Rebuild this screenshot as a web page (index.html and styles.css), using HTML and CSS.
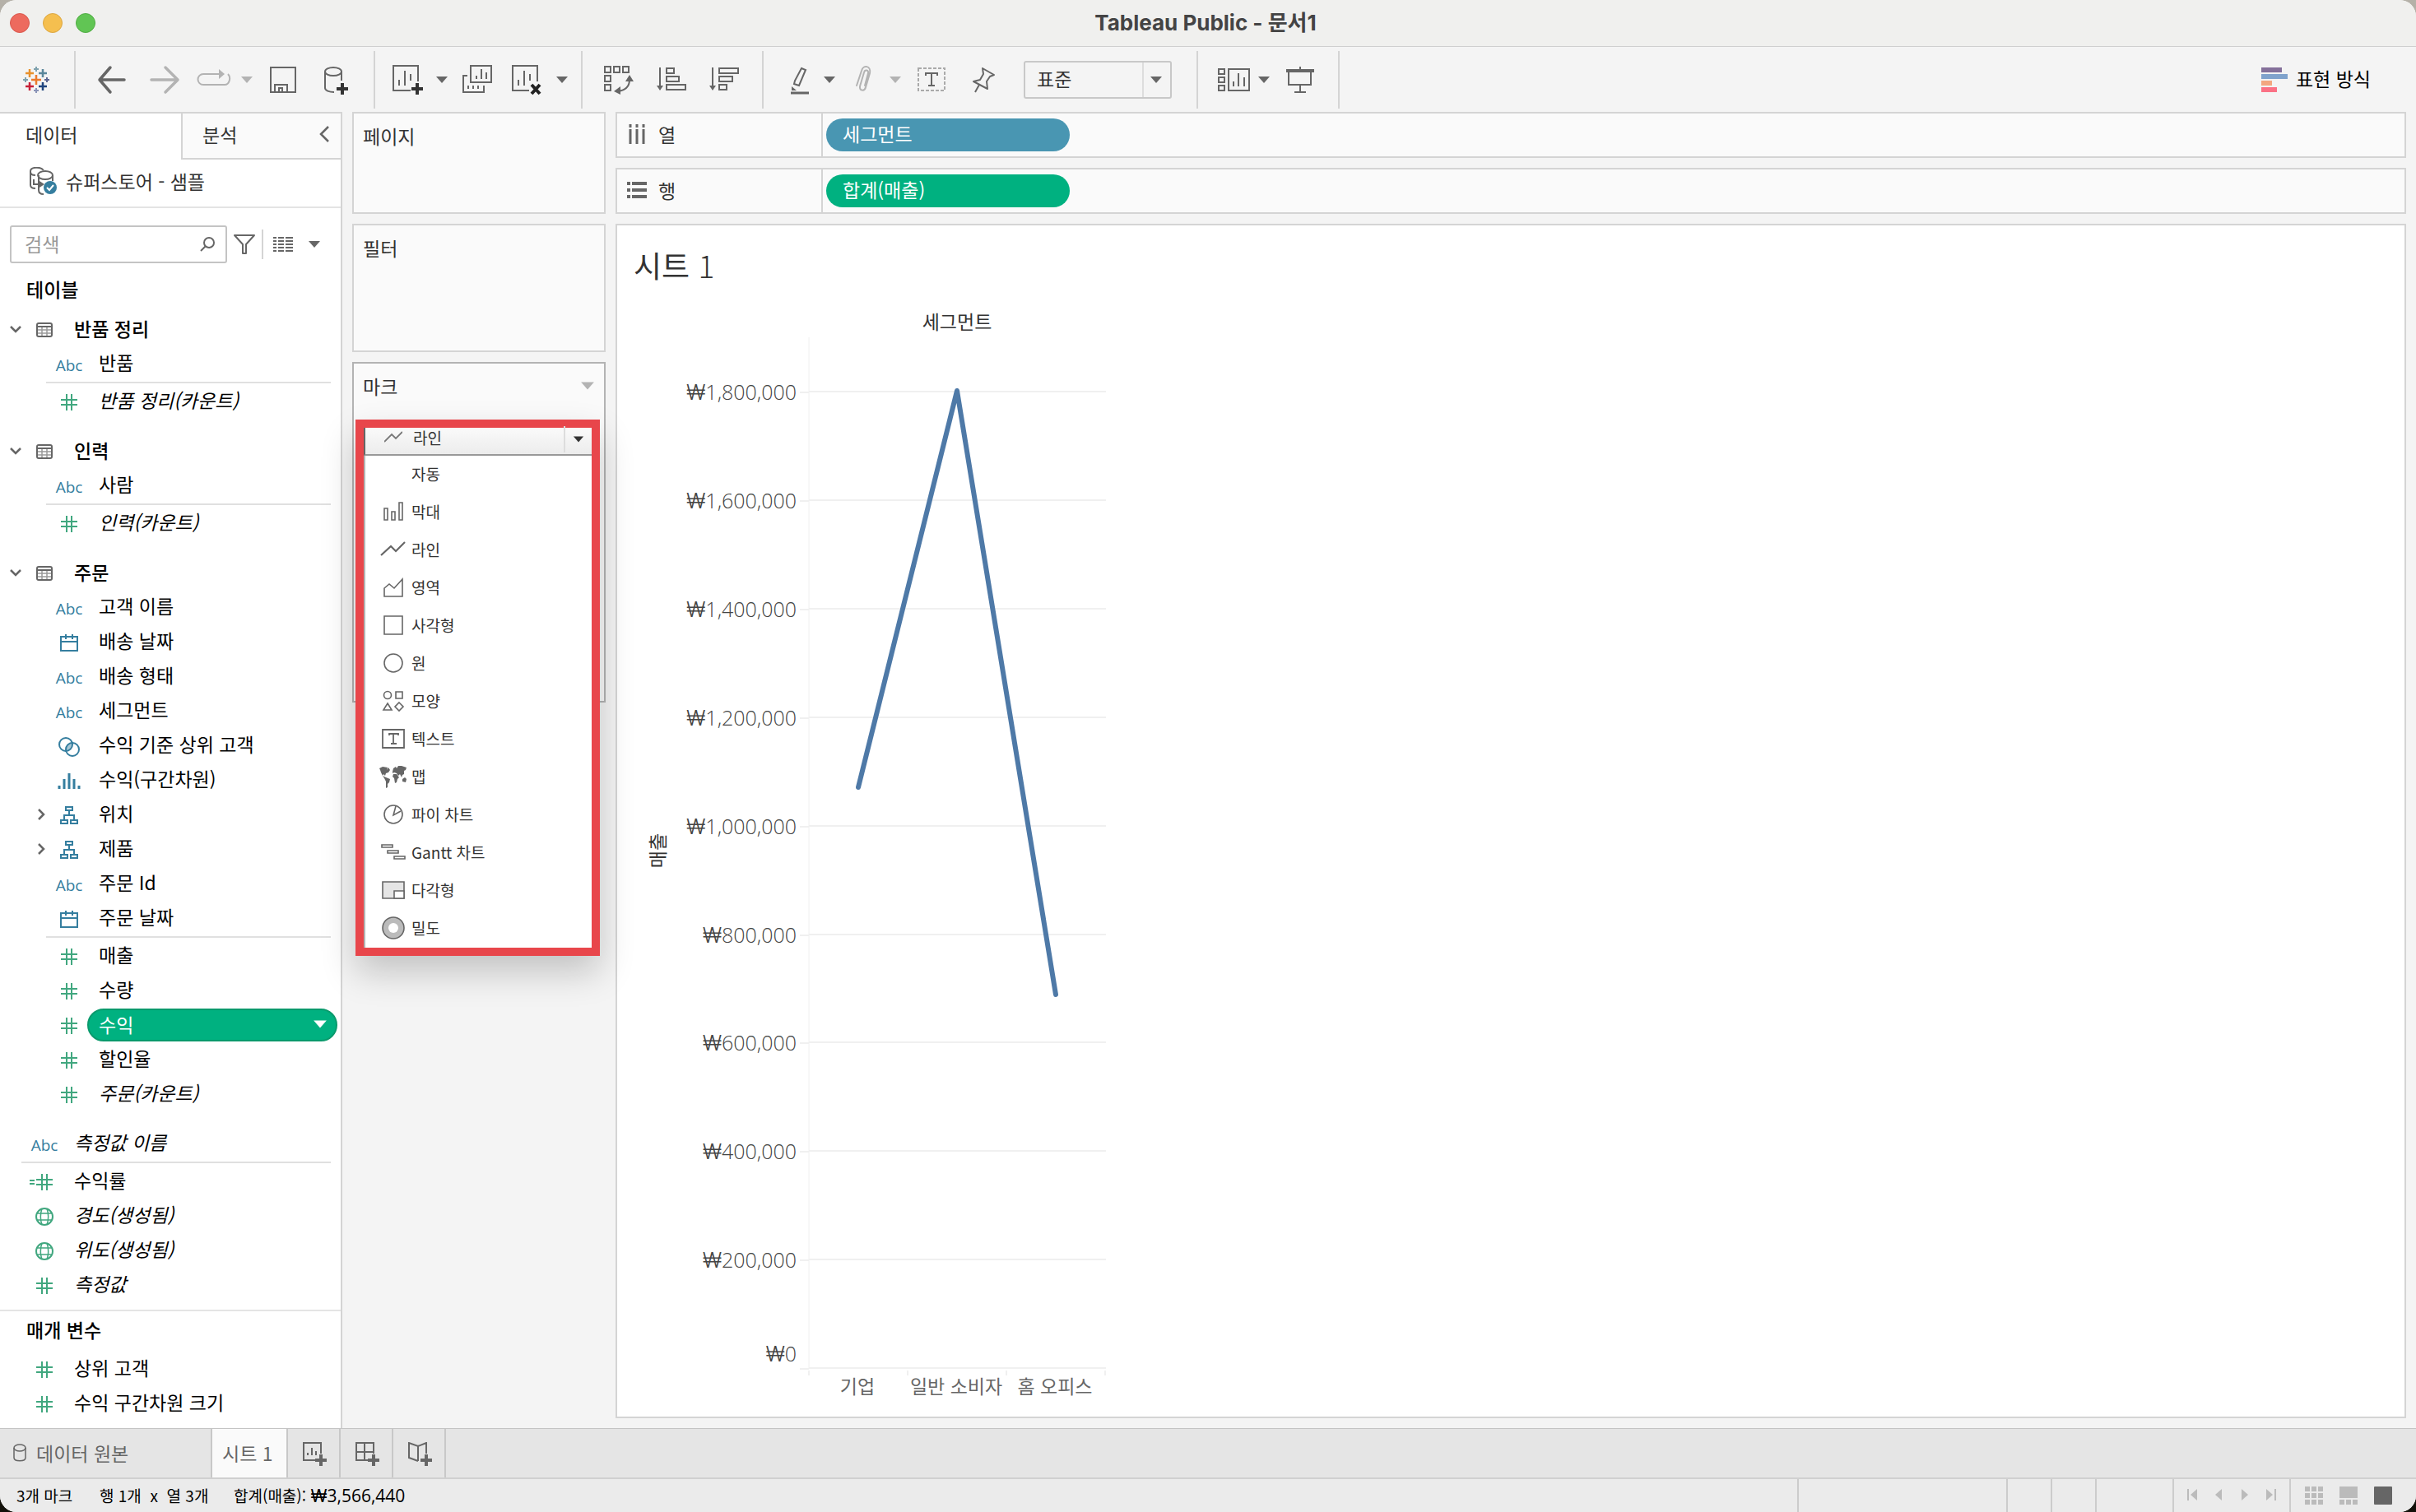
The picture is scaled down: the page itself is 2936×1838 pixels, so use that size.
FILE: index.html
```
<!DOCTYPE html>
<html lang="ko">
<head>
    <meta charset="UTF-8">
    <meta name="viewport" content="width=device-width, initial-scale=1.0">
    <title>Tableau Public - 문서1</title>
    <link rel="stylesheet" href="styles.css">
</head>
<body>
    <svg class="sprite" aria-hidden="true">
        <symbol id="caret" viewBox="0 0 16 16"><path d="M1 4h14l-7 8z" fill="currentColor"/></symbol>
        <symbol id="hash" viewBox="-1 -1 22 22"><path d="M7 0v20M13 0v20M0 7h20M0 13h20" fill="none" stroke="currentColor" stroke-width="2"/></symbol>
        <symbol id="calc" viewBox="-1 -1 30 22"><path d="M15 0v20M21 0v20M8 7h20M8 13h20M0 8h6M0 12h6" fill="none" stroke="currentColor" stroke-width="2"/></symbol>
        <symbol id="globe" viewBox="0 0 22 22"><g fill="none" stroke="currentColor" stroke-width="2"><circle cx="11" cy="11" r="10"/><path d="M2 7h18M2 15h18M8 1c-2 6-2 14 0 20M14 1c2 6 2 14 0 20" stroke-width="1.5"/></g></symbol>
        <symbol id="calendar" viewBox="0 0 22 22"><path d="M1 4h20v17H1zM1 10h20M7 1v6M15 1v6" fill="none" stroke="currentColor" stroke-width="2"/></symbol>
        <symbol id="tree" viewBox="0 0 22 22"><path d="M7 1h8v4H7zM11 5v6M5 16v-5h12v5M1 17h8v4H1zM13 17h8v4h-8z" fill="none" stroke="currentColor" stroke-width="2"/></symbol>
        <symbol id="table" viewBox="0 0 20 18"><path d="M1 5h18M1 9h18M1 13h18M7 5v12M13 5v12" fill="none" stroke="#999" stroke-width="1.5"/><rect x="1" y="1" width="18" height="16" rx="2" fill="none" stroke="#666" stroke-width="2"/><path d="M1 5h18" stroke="#666" stroke-width="2"/></symbol>
        <symbol id="chevron-down" viewBox="0 0 14 14"><path d="M1 4l6 6 6-6" fill="none" stroke="#666" stroke-width="2.5"/></symbol>
        <symbol id="chevron-right" viewBox="0 0 14 14"><path d="M4 1l6 6-6 6" fill="none" stroke="#666" stroke-width="2.5"/></symbol>
    </svg>

    <div class="window">
        <header class="titlebar">
            <div class="lights"><span class="light red"></span><span class="light yellow"></span><span class="light green"></span></div>
            <h1>Tableau Public - 문서1</h1>
        </header>

        <nav class="toolbar">
            <div class="group">
                <button class="tool" aria-label="시작 페이지">
                    <svg viewBox="0 0 40 40"><g fill="none" stroke-width="2.5"><path d="M20 14v12M14 20h12" stroke="#eb7a2c"/><path d="M12 7v10M7 12h10" stroke="#e8912d"/><path d="M28 7v10M23 12h10" stroke="#5b879b"/><path d="M12 23v10M7 28h10" stroke="#c72037"/><path d="M28 23v10M23 28h10" stroke="#1f447e"/><path d="M20 4v6M17 7h6M7 17v6M4 20h6" stroke="#7fa2ae" stroke-width="2"/><path d="M33 17v6M30 20h6" stroke="#5c6692" stroke-width="2"/><path d="M20 30v6M17 33h6" stroke="#8a94b8" stroke-width="2"/></g></svg>
                </button>
            </div>
            <div class="group">
                <button class="tool" aria-label="실행 취소"><svg viewBox="0 0 40 40"><path d="M35 20H5M18 5L5 20l13 15" fill="none" stroke="#666" stroke-width="3.5" stroke-linecap="round" stroke-linejoin="round"/></svg></button>
                <button class="tool" aria-label="다시 실행"><svg viewBox="0 0 40 40"><path d="M4 20h32M21 5l15 15-15 15" fill="none" stroke="#b3b3b3" stroke-width="3.5" stroke-linecap="round" stroke-linejoin="round"/></svg></button>
                <button class="tool" aria-label="재생"><svg viewBox="0 0 40 40"><path d="M27 13H3a6 6 0 0 0 0 13h26c6 0 8-9 4-13" fill="none" stroke="#b3b3b3" stroke-width="2"/><path d="M22 7l7 6-7 6z" fill="#b3b3b3"/></svg></button>
                <button class="caret light-gray" aria-label="재생 옵션"><svg><use href="#caret"/></svg></button>
                <button class="tool" aria-label="저장"><svg viewBox="0 0 40 40"><path d="M5 5h30v30H5zM10 35v-9h15v9M15 35v-5h4v5" fill="none" stroke="#666" stroke-width="2"/></svg></button>
                <button class="tool" aria-label="새 데이터 원본"><svg viewBox="0 0 40 40"><ellipse cx="17" cy="10" rx="10" ry="5" fill="none" stroke="#666" stroke-width="2"/><path d="M7 10v20c0 3 5 5 11 5M27 10v11" fill="none" stroke="#666" stroke-width="2"/><path d="M28 24v14M21 31h14" stroke="#333" stroke-width="4"/></svg></button>
            </div>
            <div class="group group-sheet">
                <button class="tool" aria-label="새 워크시트"><svg viewBox="0 0 40 40"><path d="M24 33H3V3h30v19M10 27v-7M17 27V9M24 21v-8" fill="none" stroke="#666" stroke-width="2"/><path d="M32 24v14M25 31h14" stroke="#333" stroke-width="4"/></svg></button>
                <button class="caret" aria-label="새 워크시트 옵션"><svg><use href="#caret"/></svg></button>
                <button class="tool" aria-label="중복"><svg viewBox="0 0 40 40"><path d="M11 3h25v20H11zM7 15H2v20h25v-8M18 19v-4M24 19V7M30 19v-8M8 27v4M14 27v4M20 27v4" fill="none" stroke="#666" stroke-width="2"/></svg></button>
                <button class="tool" aria-label="시트 지우기"><svg viewBox="0 0 40 40"><path d="M22 33H2V3h30v19M9 27v-7M16 27V9M23 21v-8" fill="none" stroke="#666" stroke-width="2"/><path d="M25 26l10 11M35 26L25 37" stroke="#222" stroke-width="4"/></svg></button>
                <button class="caret" aria-label="지우기 옵션"><svg><use href="#caret"/></svg></button>
            </div>
            <div class="group">
                <button class="tool" aria-label="행과 열 바꾸기"><svg viewBox="0 0 40 40"><path d="M3 4h7v7H3zM14 4h7v7h-7zM25 4h7v7h-7zM3 15h7v7H3zM3 26h7v7H3zM33 20c0 8-5 13-15 14" fill="none" stroke="#666" stroke-width="2"/><path d="M33 14l5 8H28zM14 34l8-6v10z" fill="#666"/></svg></button>
                <button class="tool" aria-label="오름차순 정렬"><svg viewBox="0 0 40 40"><path d="M6 5v24M14 6h9v6h-9zM14 16h15v6H14zM14 26h23v6H14z" fill="none" stroke="#666" stroke-width="2"/><path d="M2 27h8l-4 6z" fill="#666"/></svg></button>
                <button class="tool" aria-label="내림차순 정렬"><svg viewBox="0 0 40 40"><path d="M6 5v24M14 6h23v6H14zM14 16h16v6H14zM14 26h9v6h-9z" fill="none" stroke="#666" stroke-width="2"/><path d="M2 27h8l-4 6z" fill="#666"/></svg></button>
            </div>
            <div class="group group-format">
                <button class="tool" aria-label="하이라이트"><svg viewBox="0 0 40 40"><path d="M22 6l5 2-8 19-6-2 1-4z" fill="none" stroke="#666" stroke-width="2"/><path d="M9 36h22" stroke="#666" stroke-width="3"/><path d="M10 28l6 5h-6z" fill="#666"/></svg></button>
                <button class="caret" aria-label="하이라이트 옵션"><svg><use href="#caret"/></svg></button>
                <button class="tool" aria-label="그룹 멤버"><svg viewBox="0 0 40 40"><path d="M19 28l4-15c1-4-4-5-5-1l-5 17c-1 6 6 6 7 1l5-17c2-9-8-11-10-3l-6 18" transform="translate(0 -1)" fill="none" stroke="#b3b3b3" stroke-width="2" stroke-linecap="round"/></svg></button>
                <button class="caret light-gray" aria-label="그룹 옵션"><svg><use href="#caret"/></svg></button>
                <button class="tool" aria-label="마크 레이블 표시"><svg viewBox="0 0 40 40"><rect x="4" y="6" width="32" height="27" fill="none" stroke="#aaa" stroke-width="2" stroke-dasharray="4 2"/><path d="M13 15v-3h14v3M20 12v15M16 27h8" fill="none" stroke="#666" stroke-width="2"/></svg></button>
                <button class="tool" aria-label="축 고정"><svg viewBox="0 0 40 40"><path d="M18 6l14 8-5 2-4 6 1 9-17-9 8-2 4-7zM14 26L9 35" fill="none" stroke="#666" stroke-width="2" stroke-linejoin="round"/></svg></button>
                <div class="fit">
                    <select aria-label="맞춤"><option>표준</option></select>
                    <svg class="fit-caret"><use href="#caret"/></svg>
                </div>
            </div>
            <div class="group">
                <button class="tool" aria-label="카드 표시"><svg viewBox="0 0 40 40"><path d="M1 7h7v6H1zM1 17h7v6H1zM1 27h7v6H1zM13 7h25v26H13zM19 28v-6M25 28V12M32 28V17" fill="none" stroke="#666" stroke-width="2"/></svg></button>
                <button class="caret" aria-label="카드 옵션"><svg><use href="#caret"/></svg></button>
                <button class="tool" aria-label="프레젠테이션 모드"><svg viewBox="0 0 40 40"><path d="M3 9h34" stroke="#666" stroke-width="4"/><path d="M6 10v16h27V10M20 4v4M20 26v9M13 35h14" fill="none" stroke="#666" stroke-width="2"/></svg></button>
            </div>
            <button class="show-me">
                <svg viewBox="0 0 32 32"><path d="M0 1h25v6H0z" fill="#84709a"/><path d="M0 9h32v6H0z" fill="#80a3cc"/><path d="M0 17h13v6H0z" fill="#f3a780"/><path d="M0 25h19v6H0z" fill="#fb7185"/></svg>
                <span>표현 방식</span>
            </button>
        </nav>

        <main class="main">
            <aside class="panel">
                <div class="panel-tabs">
                    <button class="panel-tab active">데이터</button>
                    <button class="panel-tab">분석 <svg viewBox="0 0 12 20"><path d="M11 1L2 10l9 9" fill="none" stroke="#666" stroke-width="2.5"/></svg></button>
                </div>
                <div class="source">
                    <svg viewBox="0 0 34 34"><g fill="none" stroke="#666" stroke-width="2"><path d="M17 4C13-1 1 0 1 5v17c0 3 3 4 6 4M1 6c0 3 3 4 6 4M17 33c-4 0-6-2-6-5V10"/><ellipse cx="19" cy="10" rx="9" ry="5"/><path d="M28 10v7M5 15v6h8"/></g><path d="M12 17l6 4-6 4z" fill="#666"/><circle cx="25" cy="25" r="8" fill="#357e9f"/><path d="M21 25l3 3 5-6" fill="none" stroke="#fff" stroke-width="2"/></svg>
                    슈퍼스토어 - 샘플
                </div>
                <div class="search-row">
                    <div class="search">
                        <input type="text" placeholder="검색" aria-label="검색">
                        <svg viewBox="0 0 18 18"><circle cx="11" cy="7" r="6" fill="none" stroke="#666" stroke-width="2"/><path d="M7 11l-6 6" stroke="#666" stroke-width="2"/></svg>
                    </div>
                    <button class="filter" aria-label="필터"><svg viewBox="0 0 26 24"><path d="M1 1h24L15 12v11h-4V12z" fill="none" stroke="#666" stroke-width="2" stroke-linejoin="round"/></svg></button>
                    <button class="view" aria-label="보기"><svg viewBox="0 0 24 18"><path d="M0 1h24M0 5h24M0 9h24M0 13h24M0 17h24" stroke="#666" stroke-width="2"/><path d="M5 0v18M14 0v18" stroke="#fff" stroke-width="2"/></svg></button>
                    <button class="caret" aria-label="보기 옵션"><svg><use href="#caret"/></svg></button>
                </div>
                <h2 class="tables-title">테이블</h2>

                <section class="table-group">
                    <h3><svg class="arrow"><use href="#chevron-down"/></svg><svg class="table-icon"><use href="#table"/></svg>반품 정리</h3>
                    <div class="field"><span class="type">Abc</span>반품</div>
                    <hr>
                    <div class="field measure italic"><svg class="type"><use href="#hash"/></svg>반품 정리(카운트)</div>
                </section>
                <section class="table-group">
                    <h3><svg class="arrow"><use href="#chevron-down"/></svg><svg class="table-icon"><use href="#table"/></svg>인력</h3>
                    <div class="field"><span class="type">Abc</span>사람</div>
                    <hr>
                    <div class="field measure italic"><svg class="type"><use href="#hash"/></svg>인력(카운트)</div>
                </section>
                <section class="table-group">
                    <h3><svg class="arrow"><use href="#chevron-down"/></svg><svg class="table-icon"><use href="#table"/></svg>주문</h3>
                    <div class="field"><span class="type">Abc</span>고객 이름</div>
                    <div class="field"><svg class="type"><use href="#calendar"/></svg>배송 날짜</div>
                    <div class="field"><span class="type">Abc</span>배송 형태</div>
                    <div class="field"><span class="type">Abc</span>세그먼트</div>
                    <div class="field"><svg class="type type-set" viewBox="0 0 26 24"><path d="M17 6a9 9 0 0 0-8 11 9 9 0 0 0 8-11z" fill="#a9c8d6"/><g fill="none" stroke="currentColor" stroke-width="2"><circle cx="9" cy="9" r="8"/><circle cx="17" cy="15" r="8"/></g></svg>수익 기준 상위 고객</div>
                    <div class="field"><svg class="type" viewBox="0 0 28 22"><path d="M2 17v4M8 9v12M14 2v19M20 9v12M26 17v4" stroke="currentColor" stroke-width="3"/></svg>수익(구간차원)</div>
                    <div class="field"><svg class="arrow"><use href="#chevron-right"/></svg><svg class="type"><use href="#tree"/></svg>위치</div>
                    <div class="field"><svg class="arrow"><use href="#chevron-right"/></svg><svg class="type"><use href="#tree"/></svg>제품</div>
                    <div class="field"><span class="type">Abc</span>주문 Id</div>
                    <div class="field"><svg class="type"><use href="#calendar"/></svg>주문 날짜</div>
                    <hr>
                    <div class="field measure"><svg class="type"><use href="#hash"/></svg>매출</div>
                    <div class="field measure"><svg class="type"><use href="#hash"/></svg>수량</div>
                    <div class="field measure"><svg class="type"><use href="#hash"/></svg><button class="field-pill">수익<svg><use href="#caret"/></svg></button></div>
                    <div class="field measure"><svg class="type"><use href="#hash"/></svg>할인율</div>
                    <div class="field measure italic"><svg class="type"><use href="#hash"/></svg>주문(카운트)</div>
                </section>
                <section class="root-fields">
                    <div class="field italic"><span class="type">Abc</span>측정값 이름</div>
                    <hr>
                    <div class="field measure"><svg class="type type-calc"><use href="#calc"/></svg>수익률</div>
                    <div class="field measure italic"><svg class="type"><use href="#globe"/></svg>경도(생성됨)</div>
                    <div class="field measure italic"><svg class="type"><use href="#globe"/></svg>위도(생성됨)</div>
                    <div class="field measure italic"><svg class="type"><use href="#hash"/></svg>측정값</div>
                </section>
                <section class="parameters root-fields">
                    <h2>매개 변수</h2>
                    <div class="field measure"><svg class="type"><use href="#hash"/></svg>상위 고객</div>
                    <div class="field measure"><svg class="type"><use href="#hash"/></svg>수익 구간차원 크기</div>
                </section>
            </aside>

            <div class="cards">
                <section class="card pages"><h2>페이지</h2></section>
                <section class="card filters"><h2>필터</h2></section>
                <section class="card marks">
                    <h2>마크 <svg><use href="#caret"/></svg></h2>
                    <div class="mark-picker">
                        <div class="mark-current">
                            <svg class="mark-line" viewBox="0 0 22 14"><path d="M0 13l9-9 5 5 8-8" fill="none" stroke="#777" stroke-width="1.8"/></svg>
                            <select aria-label="마크 유형"><option>라인</option></select>
                            <svg class="mark-caret"><use href="#caret"/></svg>
                        </div>
                        <ul class="mark-menu">
                            <li><button><svg viewBox="0 0 34 30"></svg>자동</button></li>
                            <li><button><svg viewBox="0 0 34 30"><path d="M6 11h4v14H6zM15 15h4v10h-4zM24 4h4v21h-4z"/></svg>막대</button></li>
                            <li><button><svg viewBox="0 0 34 30"><path d="M2 22l12-11 6 6L31 6" stroke-width="2.2"/></svg>라인</button></li>
                            <li><button><svg viewBox="0 0 34 30"><path d="M6 26V16l6-5 6 5L28 5v21z"/></svg>영역</button></li>
                            <li><button><svg viewBox="0 0 34 30"><path d="M6 4h22v22H6z"/></svg>사각형</button></li>
                            <li><button><svg viewBox="0 0 34 30"><circle cx="17" cy="15" r="11"/></svg>원</button></li>
                            <li><button><svg viewBox="0 0 34 30"><circle cx="10" cy="8" r="4.5"/><path d="M20 4h8v8h-8zM10 18l5 8H5zM24 17l5 5-5 5-5-5z"/></svg>모양</button></li>
                            <li><button><svg viewBox="0 0 34 30"><path d="M4 4h26v22H4zM12 11V9h11v2M17 9v12M14 21h7" stroke-width="1.8"/></svg>텍스트</button></li>
                            <li><button><svg viewBox="0 0 34 30"><path fill="#666" stroke="none" d="M0 5l4-2 6 1-1 3 2-3 2 3-2 3-3 1-1 3-2-2-1 2 4 2 5 2-1 4-2 2v4l-2 1v-8l-2-4-2-3-2-4-1-3zM16 9l1-4 3-2 1 2 2-3 4 0 6 2-1 3-2 1v4l-2 1-1 3-2-4-2 2-2-3-3-1-2 1zM17 12l4 0 3 4-2 2-1 4-2 1-1-6-2-2zM28 18l3-2 2 2-1 4-4-1z"/></svg>맵</button></li>
                            <li><button><svg viewBox="0 0 34 30"><circle cx="17" cy="15" r="11"/><path d="M20 5l-3 11 9-5"/></svg>파이 차트</button></li>
                            <li><button><svg viewBox="0 0 34 30"><path d="M3 6h13v3H3zM10 13h13v3H10zM18 20h13v3H18z"/></svg>Gantt 차트</button></li>
                            <li><button><svg viewBox="0 0 34 30"><path d="M4 5h26v20H4z" fill="#e5e5e5"/><path d="M18 16h12v9H18z" fill="#fff"/></svg>다각형</button></li>
                            <li><button><svg viewBox="0 0 34 30"><circle cx="17" cy="15" r="13" fill="#bbb"/><circle cx="17" cy="15" r="6" fill="#fff" stroke="none"/></svg>밀도</button></li>
                        </ul>
                    </div>
                </section>
            </div>

            <div class="workspace">
                <div class="shelf">
                    <div class="shelf-name"><svg viewBox="0 0 24 24"><path d="M4 0v4M12 0v4M20 0v4M4 6v18M12 6v18M20 6v18" stroke="#666" stroke-width="3"/></svg>열</div>
                    <button class="pill blue">세그먼트</button>
                </div>
                <div class="shelf">
                    <div class="shelf-name"><svg viewBox="0 0 24 24"><path d="M0 4h4M0 12h4M0 20h4M6 4h18M6 12h18M6 20h18" stroke="#666" stroke-width="4"/></svg>행</div>
                    <button class="pill">합계(매출)</button>
                </div>
                <section class="sheet">
                    <h2>시트 <span class="thin">1</span></h2>
                    <svg class="chart" viewBox="770 370 620 1340">
                        <g stroke="#f0f0f0" stroke-width="2">
                            <path d="M983 476h361M983 608h361M983 740h361M983 872h361M983 1004h361M983 1136h361M983 1267h361M983 1399h361M983 1531h361M983 1663h361"/>
                            <path d="M972 477h11M972 609h11M972 741h11M972 873h11M972 1005h11M972 1137h11M972 1268h11M972 1400h11M972 1532h11M972 1664h11"/>
                            <path d="M983 1666v6M1103 1666v6M1223 1666v6M1343 1666v6"/>
                            <path d="M983 410v1253" stroke-width="1"/>
                        </g>
                        <text class="header" x="1163" y="400">세그먼트</text>
                        <g class="values">
                            <text x="968" y="486"><tspan class="won">₩</tspan>1,800,000</text>
                            <text x="968" y="618"><tspan class="won">₩</tspan>1,600,000</text>
                            <text x="968" y="750"><tspan class="won">₩</tspan>1,400,000</text>
                            <text x="968" y="882"><tspan class="won">₩</tspan>1,200,000</text>
                            <text x="968" y="1014"><tspan class="won">₩</tspan>1,000,000</text>
                            <text x="968" y="1146"><tspan class="won">₩</tspan>800,000</text>
                            <text x="968" y="1277"><tspan class="won">₩</tspan>600,000</text>
                            <text x="968" y="1409"><tspan class="won">₩</tspan>400,000</text>
                            <text x="968" y="1541"><tspan class="won">₩</tspan>200,000</text>
                            <text x="968" y="1655"><tspan class="won">₩</tspan>0</text>
                        </g>
                        <text class="header" transform="translate(808 1034) rotate(-90)">매출</text>
                        <path d="M1043 957L1163 475l120 734" fill="none" stroke="#4e79a7" stroke-width="6" stroke-linecap="round" stroke-linejoin="round"/>
                        <g class="names">
                            <text x="1042" y="1694">기업</text>
                            <text x="1162" y="1694">일반 소비자</text>
                            <text x="1282" y="1694">홈 오피스</text>
                        </g>
                    </svg>
                </section>
            </div>
        </main>

        <nav class="sheet-tabs">
            <button class="tab tab-source"><svg viewBox="0 0 16 22"><g fill="none" stroke="#666" stroke-width="1.5"><ellipse cx="8" cy="5" rx="7" ry="4"/><path d="M1 5v12c0 5 14 5 14 0V5"/></g></svg>데이터 원본</button>
            <button class="tab tab-active">시트 1</button>
            <button class="tab tab-new" aria-label="새 워크시트"><svg viewBox="0 0 30 30"><path d="M15 22H1V1h21v13M6 16v-3M11 16V7M16 16v-5" fill="none" stroke="#666" stroke-width="2"/><path d="M22 15v14M15 22h14" stroke="#666" stroke-width="4"/></svg></button>
            <button class="tab tab-new" aria-label="새 대시보드"><svg viewBox="0 0 30 30"><path d="M15 22H1V1h21v13M1 12h21M11 1v21" fill="none" stroke="#666" stroke-width="2"/><path d="M22 15v14M15 22h14" stroke="#666" stroke-width="4"/></svg></button>
            <button class="tab tab-new" aria-label="새 스토리"><svg viewBox="0 0 30 30"><path d="M12 23L1 19V1l11 4 10-4v13M12 5v18" fill="none" stroke="#666" stroke-width="2"/><path d="M22 15v14M15 22h14" stroke="#666" stroke-width="4"/></svg></button>
        </nav>

        <footer class="status">
            <span class="count">3개 마크</span>
            <span class="size">행 1개 &nbsp;x&nbsp; 열 3개</span>
            <span>합계(매출): <span class="amount"><span class="won">₩</span>3,566,440</span></span>
            <div class="cells"><i class="cell wide"></i><i class="cell"></i><i class="cell"></i><i class="cell last"></i></div>
            <div class="pager">
                <button aria-label="처음"><svg viewBox="0 0 14 14"><path d="M1 0h2v14H1zM13 0v14L5 7z"/></svg></button>
                <button aria-label="이전"><svg viewBox="0 0 14 14"><path d="M11 0v14L3 7z"/></svg></button>
                <button aria-label="다음"><svg viewBox="0 0 14 14"><path d="M3 0v14l8-7z"/></svg></button>
                <button aria-label="마지막"><svg viewBox="0 0 14 14"><path d="M11 0h2v14h-2zM1 0v14l8-7z"/></svg></button>
            </div>
            <div class="views">
                <button aria-label="시트 정렬"><svg viewBox="0 0 22 22"><path d="M0 0h6v6H0zM8 0h6v6H8zM16 0h6v6h-6zM0 8h6v6H0zM8 8h6v6H8zM16 8h6v6h-6zM0 16h6v6H0zM8 16h6v6H8zM16 16h6v6h-6z"/></svg></button>
                <button aria-label="필름스트립"><svg viewBox="0 0 22 22"><path d="M0 0h22v14H0zM0 16h6v6H0zM8 16h6v6H8zM16 16h6v6h-6z"/></svg></button>
                <button class="on" aria-label="탭 표시"><svg viewBox="0 0 22 22"><rect width="22" height="22" rx="1"/></svg></button>
            </div>
        </footer>
    </div>
</body>
</html>
```
FILE: styles.css
```
* {
    box-sizing: border-box;
}
body {
    margin: 0;
    background: linear-gradient(#b5b1a8, #12110a);
    font-family: "Noto Sans CJK KR", sans-serif;
    font-size: 23px;
    line-height: 32px;
    color: #333;
}
h1, h2, h3, ul {
    margin: 0;
    padding: 0;
    font-size: 23px;
    font-weight: 400;
    list-style: none;
}
button, input, select {
    margin: 0;
    padding: 0;
    border: none;
    background: none;
    font: inherit;
    color: inherit;
    text-align: left;
}
select {
    appearance: none;
}
svg {
    display: block;
    flex: none;
}
.sprite {
    position: absolute;
    width: 0;
    height: 0;
}
.window {
    display: flex;
    flex-direction: column;
    min-height: 100vh;
    background: #f4f4f4;
    border-radius: 20px;
    overflow: hidden;
}

/* title bar */
.titlebar {
    display: flex;
    align-items: center;
    height: 57px;
    padding: 0 12px;
    background: #f0f0ee;
    border-bottom: 1px solid #cfcfcf;
}
.titlebar h1 {
    flex: 1;
    padding-right: 110px;
    font-family: Inter, "Noto Sans CJK KR", sans-serif;
    font-size: 26px;
    font-weight: 700;
    text-align: center;
    color: #444;
}
.lights {
    display: flex;
    gap: 16px;
}
.light {
    width: 24px;
    height: 24px;
    border-radius: 50%;
}
.red {
    background: #ed6a5e;
    border: 1px solid #d8574c;
}
.yellow {
    background: #f5bf4f;
    border: 1px solid #dba640;
}
.green {
    background: #61c554;
    border: 1px solid #50ac43;
}

/* toolbar */
.toolbar {
    display: flex;
    align-items: center;
    height: 79px;
}
.group {
    display: flex;
    align-items: center;
    height: 70px;
    padding: 0 26px 0 24px;
    border-right: 2px solid #d4d4d4;
}
.group-sheet {
    padding: 0 15px 0 19px;
}
.group-format {
    padding-right: 30px;
}
.tool svg {
    width: 40px;
    height: 40px;
    overflow: visible;
}
.caret {
    color: #666;
}
.caret svg {
    width: 16px;
    height: 16px;
}
.light-gray {
    color: #b3b3b3;
}
.tool + .tool {
    margin-left: 24px;
}
.tool + .caret {
    margin-left: 8px;
}
.caret + .tool {
    margin-left: 16px;
}
.group-sheet .tool + .tool {
    margin-left: 20px;
}
.group-sheet .tool + .caret {
    margin-left: 14px;
}
.fit {
    position: relative;
    margin-left: 28px;
}
.fit select {
    display: block;
    width: 180px;
    height: 46px;
    padding: 0 0 4px 14px;
    border: 2px solid #c8c8c8;
    border-radius: 3px;
    background: linear-gradient(#ddd, #ddd) 142px 0 / 2px 100% no-repeat;
}
.fit-caret {
    position: absolute;
    right: 11px;
    top: 15px;
    width: 16px;
    height: 16px;
    color: #666;
}
.show-me {
    display: flex;
    align-items: center;
    gap: 10px;
    margin-left: auto;
    margin-right: 55px;
    color: #000;
}
.show-me span {
    padding-bottom: 4px;
}
.show-me svg {
    width: 32px;
    height: 32px;
}

/* main area */
.main {
    display: flex;
    flex: 1;
}
.panel {
    display: flex;
    flex-direction: column;
    width: 416px;
    border-top: 2px solid #d4d4d4;
    border-right: 2px solid #d4d4d4;
    background: #fff;
    color: #000;
}
.panel-tabs {
    display: flex;
    height: 56px;
    color: #333;
}
.panel-tab {
    display: flex;
    align-items: center;
    justify-content: space-between;
    width: 194px;
    padding: 0 14px 4px 24px;
    border-left: 2px solid #d4d4d4;
    border-bottom: 2px solid #d4d4d4;
    background: #fafafa;
}
.panel-tab.active {
    width: 220px;
    padding: 0 0 6px 31px;
    border: none;
    background: none;
}
.panel-tab svg {
    width: 12px;
    height: 20px;
}
.source {
    display: flex;
    align-items: center;
    gap: 10px;
    height: 59px;
    padding: 0 0 6px 36px;
    border-bottom: 2px solid #e4e4e4;
    color: #333;
}
.source svg {
    width: 34px;
    height: 34px;
}
.search-row {
    display: flex;
    align-items: center;
    padding: 21px 12px 15px;
}
.search {
    position: relative;
    flex: none;
}
.search input {
    display: block;
    width: 264px;
    height: 46px;
    padding: 0 40px 3px 16px;
    border: 2px solid #c4c4c4;
    border-radius: 3px;
}
.search input::placeholder {
    color: #999;
    opacity: 1;
}
.search svg {
    position: absolute;
    right: 15px;
    top: 14px;
    width: 18px;
    height: 18px;
}
.filter {
    margin: 0 8px;
}
.filter svg {
    width: 26px;
    height: 24px;
}
.view {
    margin-right: 18px;
    padding: 9px 0 9px 12px;
    border-left: 2px solid #d4d4d4;
}
.view svg {
    width: 24px;
    height: 18px;
}
.tables-title {
    height: 45px;
    padding-left: 32px;
}
.tables-title, .table-group h3, .parameters h2 {
    font-weight: 500;
}
.table-group {
    margin-bottom: 20px;
}
.table-group:nth-of-type(3) {
    margin-bottom: 18px;
}
.table-group h3 {
    display: flex;
    align-items: center;
    height: 40px;
    padding: 0 0 2px 12px;
}
.arrow {
    width: 14px;
    height: 14px;
    margin-top: 2px;
}
.table-icon {
    width: 20px;
    height: 18px;
    margin: 4px 26px 0 18px;
}
.table-group hr, .root-fields hr {
    height: 2px;
    margin: 2px 12px 0 56px;
    border: none;
    background: #e0e0e0;
}
.root-fields hr {
    margin-left: 26px;
}
.field {
    display: grid;
    position: relative;
    align-items: center;
    height: 42px;
    padding: 0 0 2px 120px;
}
.root-fields .field {
    padding-left: 90px;
}
/* type icon sits in the gutter left of the name */
.field .type {
    position: absolute;
    left: 64px;
    top: 12px;
    width: 40px;
    height: 22px;
    font-family: "Open Sans", sans-serif;
    font-size: 19px;
    font-style: normal;
    line-height: 24px;
    text-align: center;
    color: #357e9f;
}
.root-fields .field .type {
    left: 34px;
}
.field.measure .type {
    color: #41a77f;
}
.root-fields .field .type-calc {
    left: 30px;
}
.field .type-set {
    height: 24px;
}
.field .arrow {
    position: absolute;
    left: 43px;
    top: 13px;
}
.italic {
    font-style: italic;
}
.field-pill {
    display: flex;
    align-items: center;
    justify-content: space-between;
    height: 40px;
    margin: 2px 4px 0 -14px;
    padding: 0 10px 2px 12px;
    border: 2px solid #0a9a6c;
    border-radius: 20px;
    background: #00b180;
    color: #fff;
}
.field-pill svg {
    width: 18px;
    height: 18px;
}
.parameters {
    margin-top: 10px;
    padding-top: 6px;
    border-top: 2px solid #e4e4e4;
}
.parameters h2 {
    height: 42px;
    padding-left: 32px;
}

/* cards */
.cards {
    display: flex;
    flex-direction: column;
    gap: 12px;
    width: 332px;
    padding: 0 12px;
}
.card {
    border: 2px solid #d4d4d4;
    background: #fafafa;
}
.card h2 {
    display: flex;
    align-items: center;
    justify-content: space-between;
    padding: 11px 11px 0;
}
.pages {
    height: 124px;
}
.filters {
    height: 156px;
}
.marks {
    position: relative;
    height: 414px;
    border-color: #b3b3b3;
}
.marks h2 svg {
    width: 18px;
    height: 18px;
    color: #b3b3b3;
}
.mark-picker {
    position: absolute;
    left: 2px;
    top: 68px;
    width: 297px;
    border: 10px solid #e8464b;
    background: #fff;
    box-shadow: 0 20px 40px rgba(0, 0, 0, 0.2);
    font-size: 19px;
}
.mark-current {
    position: relative;
    display: flex;
    height: 34px;
    border-left: 2px solid #666;
    border-bottom: 2px solid #999;
    background: linear-gradient(#fafafa, #ececec);
}
.mark-current select {
    width: 100%;
    height: 28px;
    margin-top: -4px;
    padding-left: 58px;
}
.mark-line {
    position: absolute;
    left: 23px;
    top: 4px;
    width: 22px;
    height: 14px;
}
.mark-caret {
    position: absolute;
    right: 0;
    top: -2px;
    width: 34px;
    height: 32px;
    padding: 8px 9px;
    border-left: 2px solid #ddd;
    color: #333;
}
.mark-menu {
    border-left: 2px solid #b3b3b3;
    font-size: 19px;
}
.mark-menu button {
    display: flex;
    align-items: center;
    gap: 5px;
    width: 100%;
    height: 46px;
    padding: 0 0 2px 17px;
}
.mark-menu svg {
    width: 34px;
    height: 30px;
    fill: none;
    stroke: #666;
    stroke-width: 1.6;
}

/* shelves and sheet */
.workspace {
    display: flex;
    flex: 1;
    flex-direction: column;
    gap: 12px;
    padding: 0 12px 12px 0;
}
.shelf {
    display: flex;
    align-items: center;
    gap: 4px;
    height: 56px;
    border: 2px solid #d4d4d4;
    background: #fafafa;
}
.shelf-name {
    display: flex;
    align-items: center;
    gap: 14px;
    width: 250px;
    height: 52px;
    padding: 0 0 3px 12px;
    border-right: 2px solid #d4d4d4;
}
.shelf-name svg {
    width: 24px;
    height: 24px;
}
.pill {
    width: 296px;
    height: 40px;
    padding: 0 20px 4px;
    border-radius: 20px;
    background: #00b180;
    color: #fff;
}
.blue {
    background: #4996b2;
}
.sheet {
    flex: 1;
    border: 2px solid #d4d4d4;
    background: #fff;
}
.sheet h2 {
    padding: 24px 20px;
    font-size: 37px;
    line-height: 48px;
}
.thin {
    font-weight: 300;
}
.chart {
    width: 620px;
    height: 1340px;
    margin-left: 20px;
}
.chart text {
    text-anchor: middle;
}
.header {
    fill: #333;
}
.chart .values text {
    text-anchor: end;
    font-family: "Open Sans", sans-serif;
    font-size: 25px;
    font-weight: 300;
    fill: #444;
}
.won {
    font-family: Inter, sans-serif;
}
.names {
    fill: #666;
}

/* sheet tabs */
.sheet-tabs {
    display: flex;
    height: 62px;
    border-top: 1px solid #c4c4c4;
    border-bottom: 2px solid #d0d0d0;
    background: #e5e5e5;
    color: #666;
}
.tab {
    display: flex;
    align-items: center;
    padding-bottom: 2px;
    border-right: 2px solid #c8c8c8;
}
.tab-source {
    gap: 12px;
    width: 258px;
    padding-left: 16px;
}
.tab-source svg {
    width: 16px;
    height: 22px;
}
.tab-active {
    width: 92px;
    padding-left: 12px;
    background: #fafafa;
}
.tab-new {
    justify-content: center;
    width: 64px;
    padding: 2px 0 0 4px;
}
.tab-new svg {
    width: 30px;
    height: 30px;
}

/* status bar */
.status {
    display: flex;
    align-items: center;
    height: 40px;
    padding: 0 0 0 20px;
    background: #ebebeb;
    font-size: 19px;
    color: #000;
}
.count {
    width: 101px;
}
.size {
    width: 163px;
}
.amount {
    font-family: "Open Sans", sans-serif;
    font-size: 21px;
}
.cells {
    display: flex;
    align-self: stretch;
    margin-left: auto;
}
.cell {
    width: 54px;
    border-left: 2px solid #ccc;
}
.cell.wide {
    width: 254px;
}
.cell.last {
    width: 94px;
}
.pager, .views {
    display: flex;
    align-items: center;
    align-self: stretch;
    border-left: 2px solid #ccc;
    fill: #bbb;
}
.pager {
    gap: 18px;
    width: 142px;
    padding: 0 14px 2px 15px;
}
.pager svg {
    width: 14px;
    height: 14px;
}
.views {
    gap: 20px;
    width: 154px;
    padding-left: 17px;
}
.views svg {
    width: 22px;
    height: 22px;
}
.views .on {
    fill: #666;
}
```
